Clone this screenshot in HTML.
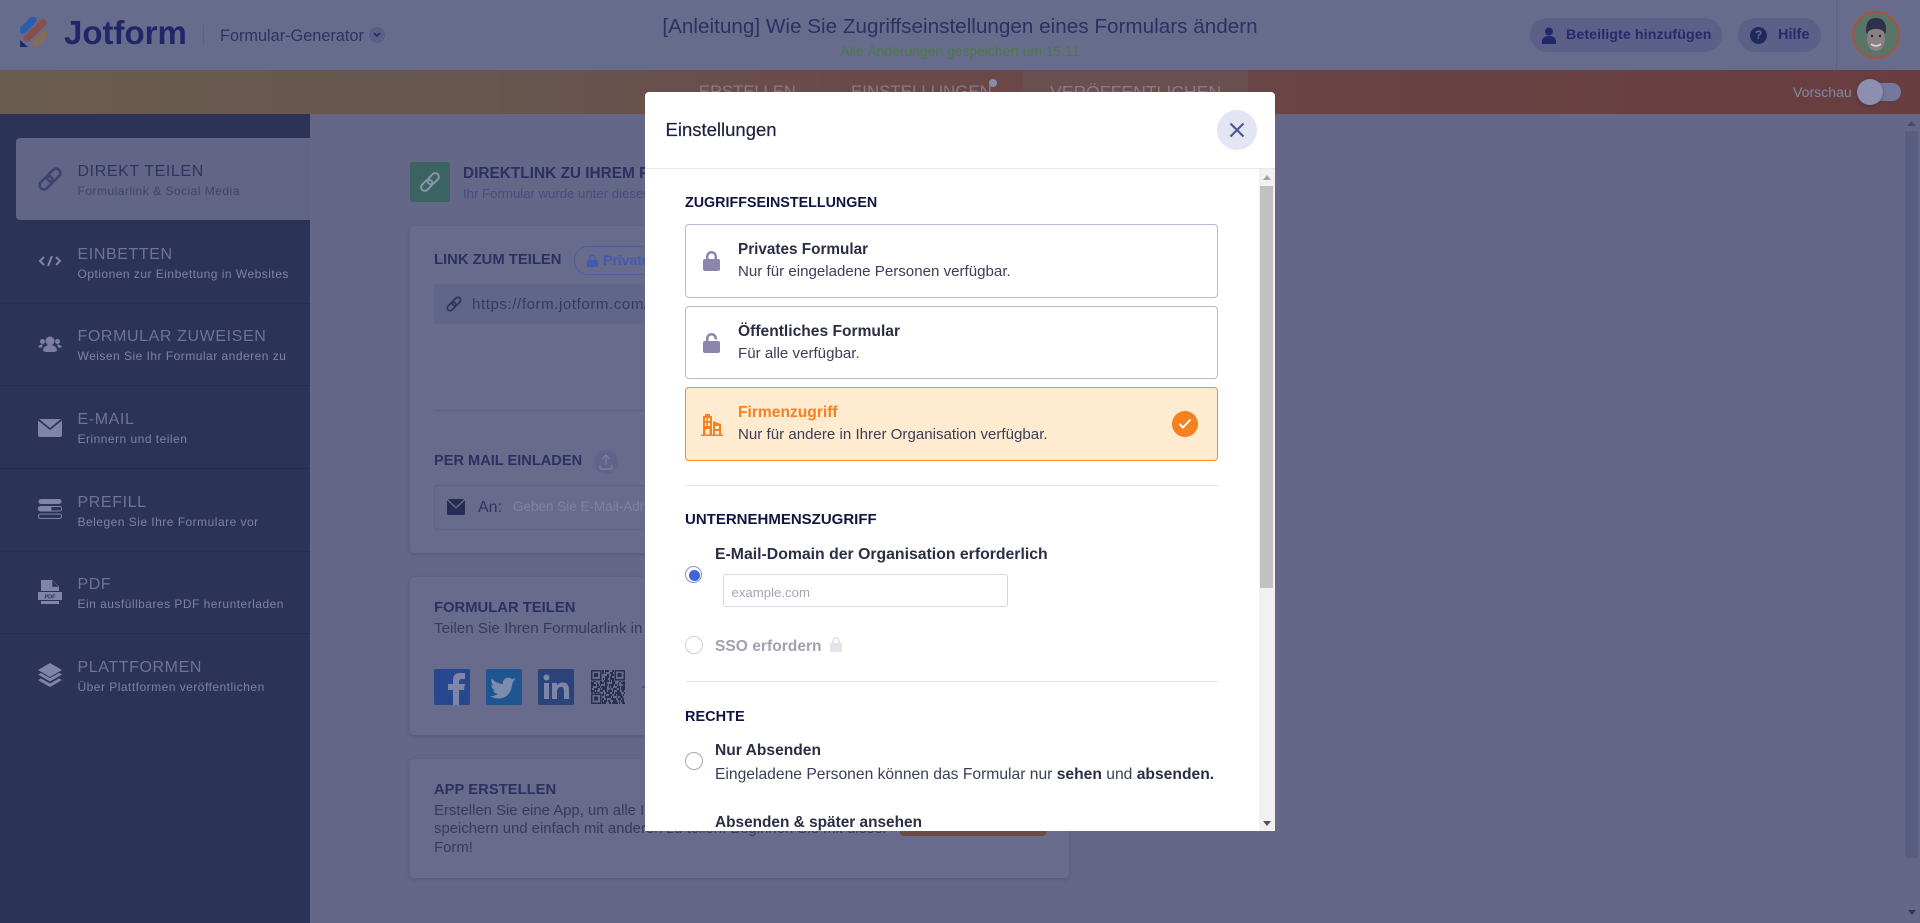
<!DOCTYPE html>
<html lang="de"><head><meta charset="utf-8"><title>Jotform</title>
<style>
html,body{margin:0;padding:0;width:1920px;height:923px;overflow:hidden;background:#646787;font-family:"Liberation Sans",sans-serif}
div,span,svg{position:absolute}
.t{white-space:nowrap;line-height:20px;height:20px}
.st{color:#6e7397;font-size:16px;left:77.5px;letter-spacing:.6px}
.ss{color:#7f83a3;font-size:12px;left:77.5px;letter-spacing:.48px}
.card{left:410px;width:659px;background:#686b8b;border-radius:4px;box-shadow:0 1px 3px rgba(40,44,80,.25)}
.h{font-weight:700;color:#2a3160;font-size:14.8px;left:434px}
.b{left:434px;font-size:14.9px;color:#343a60}
.mh{font-weight:700;color:#0f1540;font-size:14.5px;left:40px}
.opt{left:40px;width:531px;background:#fff;border:1px solid #b9b9d3;border-radius:4px}
.ot{left:93px;font-size:15.6px;font-weight:700;color:#2b2f45}
.os{left:93px;font-size:15.1px;color:#3a3e58}
.rad{width:16px;height:16px;border:1px solid #a8a8b4;border-radius:50%;background:#fff;left:40px}
</style></head><body>

<!-- header -->
<div style="left:0;top:0;width:1920px;height:70px;background:#686c8c"></div>
<svg style="left:20px;top:17px" width="28" height="31" viewBox="0 0 28 31">
<path d="M3 13 L13 3" stroke="#2a5ea8" stroke-width="7.5" stroke-linecap="round"/>
<path d="M7 21 L23 6" stroke="#85504f" stroke-width="7.5" stroke-linecap="round"/>
<path d="M16 26 L24 18" stroke="#866c55" stroke-width="7.5" stroke-linecap="round"/>
<path d="M0 23 L8 30 H0Z" fill="#20296a"/></svg>
<div class="t" style="left:64px;top:23px;font-size:33px;font-weight:700;color:#1f2768">Jotform</div>
<div style="left:203px;top:25px;width:1px;height:20px;background:#5d6185"></div>
<div class="t" style="left:220px;top:26px;font-size:16.3px;color:#2b3362">Formular-Generator</div>
<div style="left:369px;top:27px;width:16px;height:16px;border-radius:50%;background:#5a5f88"></div>
<svg style="left:373px;top:32px" width="8" height="6" viewBox="0 0 8 6"><path d="M1 1l3 3 3-3" fill="none" stroke="#252b63" stroke-width="1.6"/></svg>
<div class="t" style="left:560px;width:800px;text-align:center;top:17px;font-size:20.7px;color:#2a3163">[Anleitung] Wie Sie Zugriffseinstellungen eines Formulars ändern</div>
<div class="t" style="left:760px;width:400px;text-align:center;top:41px;font-size:13.9px;color:#4a7a46">Alle Änderungen gespeichert um 15:11</div>
<div style="left:1530px;top:18px;width:192px;height:34px;border-radius:17px;background:#5c6088"></div>
<svg style="left:1542px;top:27px" width="14" height="17" viewBox="0 0 14 17"><circle cx="7" cy="4.5" r="4" fill="#20276a"/><path d="M0 17v-3c0-3 3-5 7-5s7 2 7 5v3z" fill="#20276a"/></svg>
<div class="t" style="left:1566px;top:25px;font-size:14.2px;font-weight:700;color:#242b6a;letter-spacing:.1px">Beteiligte hinzufügen</div>
<div style="left:1738px;top:18px;width:83px;height:34px;border-radius:17px;background:#5c6088"></div>
<div style="left:1750px;top:27px;width:17px;height:17px;border-radius:50%;background:#20285e;color:#686c8c;font-size:12px;font-weight:700;line-height:17px;text-align:center">?</div>
<div class="t" style="left:1778px;top:25px;font-size:14.5px;font-weight:700;color:#242b6a">Hilfe</div>
<div style="left:1836px;top:0;width:1px;height:70px;background:#5f6383"></div>
<svg style="left:1852px;top:11px" width="48" height="48" viewBox="0 0 48 48">
<circle cx="24" cy="24" r="23" fill="#5a7468" stroke="#a5533f" stroke-width="2"/>
<path d="M14 20c0-10 4-13 10-13s10 3 10 13l-2 6H16z" fill="#2c3049"/>
<ellipse cx="24" cy="27" rx="9" ry="13" fill="#8a8084"/>
<path d="M15 22c3-5 14-6 18 0l1-8-8-5-9 3z" fill="#2c3049"/>
<path d="M19 33q5 4 10 0" stroke="#d8d8e0" stroke-width="1.5" fill="none"/>
<circle cx="20" cy="25" r="1.2" fill="#252838"/><circle cx="28" cy="25" r="1.2" fill="#252838"/>
</svg>

<!-- orange bar -->
<div style="left:0;top:70px;width:1920px;height:44px;background:linear-gradient(90deg,#6a5c4e 0%,#68564f 25%,#6a4a49 45%,#683d3f 100%)"></div>
<div style="left:1023px;top:70px;width:225px;height:44px;background:#6a4f50"></div>
<div class="t" style="left:699px;top:82px;font-size:16.6px;color:#8a7a85">ERSTELLEN</div>
<div class="t" style="left:851px;top:82px;font-size:16.9px;color:#8a7a85">EINSTELLUNGEN</div>
<div style="left:989px;top:79px;width:8px;height:8px;border-radius:50%;background:#8a8ca8"></div>
<div class="t" style="left:1050px;top:82px;font-size:17.6px;color:#8a7a85">VERÖFFENTLICHEN</div>
<div class="t" style="left:1793px;top:82px;font-size:14.1px;color:#8487a6">Vorschau</div>
<div style="left:1858px;top:83px;width:43px;height:18px;border-radius:9px;background:#74789a"></div>
<div style="left:1857px;top:79px;width:26px;height:26px;border-radius:50%;background:#8c8fb0;box-shadow:0 1px 3px rgba(30,30,60,.4)"></div>

<!-- sidebar -->
<div style="left:0;top:114px;width:310px;height:809px;background:#2b3357"></div>
<div style="left:16px;top:138px;width:294px;height:82px;background:#626585;border-radius:4px 0 0 4px"></div>
<div style="left:0;top:303px;width:310px;height:1px;background:#262d4f"></div>
<div style="left:0;top:385px;width:310px;height:1px;background:#262d4f"></div>
<div style="left:0;top:468px;width:310px;height:1px;background:#262d4f"></div>
<div style="left:0;top:551px;width:310px;height:1px;background:#262d4f"></div>
<div style="left:0;top:633px;width:310px;height:1px;background:#262d4f"></div>

<div class="t st" style="top:162px;color:#2d3560">DIREKT TEILEN</div>
<div class="t ss" style="top:181px;color:#3d4570">Formularlink &amp; Social Media</div>
<div class="t st" style="top:245px">EINBETTEN</div>
<div class="t ss" style="top:264px">Optionen zur Einbettung in Websites</div>
<div class="t st" style="top:327px">FORMULAR ZUWEISEN</div>
<div class="t ss" style="top:346px">Weisen Sie Ihr Formular anderen zu</div>
<div class="t st" style="top:410px">E-MAIL</div>
<div class="t ss" style="top:429px">Erinnern und teilen</div>
<div class="t st" style="top:493px">PREFILL</div>
<div class="t ss" style="top:512px">Belegen Sie Ihre Formulare vor</div>
<div class="t st" style="top:575px">PDF</div>
<div class="t ss" style="top:594px">Ein ausfüllbares PDF herunterladen</div>
<div class="t st" style="top:658px">PLATTFORMEN</div>
<div class="t ss" style="top:677px">Über Plattformen veröffentlichen</div>

<svg style="left:36px;top:165px" width="28" height="28" viewBox="0 0 26 26" fill="none" stroke="#3c436d" stroke-width="2.4"><g transform="rotate(-45 13 13)"><rect x="1" y="9" width="14" height="8" rx="4"/><rect x="11" y="9" width="14" height="8" rx="4"/></g></svg>
<svg style="left:38px;top:255px" width="24" height="12" viewBox="0 0 24 12" fill="none" stroke="#8084a6" stroke-width="2"><path d="M6 2L2 6l4 4M18 2l4 4-4 4M14 1l-4 10"/></svg>
<svg style="left:38px;top:336px" width="24" height="16" viewBox="0 0 24 16" fill="#7b7fa2"><circle cx="12" cy="5" r="4.5"/><circle cx="4.5" cy="5.5" r="2.5"/><circle cx="19.5" cy="5.5" r="2.5"/><path d="M5 15c0-4 3-6 7-6s7 2 7 6l-3 1H8zM0 11c1-2 3-2.5 5-2.5l-1.500 3.500zM24 11c-1-2-3-2.500-5-2.500l1.500 3.500z"/></svg>
<svg style="left:38px;top:419px" width="24" height="18" viewBox="0 0 24 18"><path d="M1 0h22l-11 9z" fill="#8084a6"/><path d="M0 1.5l12 9.5 12-9.5V16a2 2 0 0 1-2 2H2a2 2 0 0 1-2-2z" fill="#8084a6"/></svg>
<svg style="left:38px;top:499px" width="24" height="20" viewBox="0 0 24 20"><rect x="0.5" y="0" width="23" height="5" rx="2.5" fill="#8084a6"/><rect x="0.5" y="7.5" width="23" height="4.5" rx="2" fill="#2b3357" stroke="#8084a6"/><rect x="0.5" y="7.5" width="13" height="4.5" rx="2" fill="#8084a6"/><rect x="0.5" y="15" width="23" height="4.5" rx="2" fill="none" stroke="#8084a6"/></svg>
<svg style="left:38px;top:580px" width="24" height="24" viewBox="0 0 24 24" fill="#8084a6"><path d="M3 0h11l7 7v4H3z"/><path d="M14 0v7h7z" fill="#2b3357" stroke="#8084a6" stroke-width=".5"/><rect x="0" y="12" width="24" height="8"/><rect x="3" y="21" width="18" height="3"/><text x="12" y="18.5" font-size="5.5" font-weight="700" text-anchor="middle" fill="#2b3357" font-family="Liberation Sans">PDF</text></svg>
<svg style="left:38px;top:663px" width="24" height="24" viewBox="0 0 24 24" fill="#8084a6"><path d="M12 0l12 7-12 7L0 7z"/><path d="M0 11.5l3-1.5 9 5 9-5 3 1.5-12 7z"/><path d="M0 17l3-1.5 9 5 9-5 3 1.5-12 7z"/></svg>

<!-- main -->
<div style="left:410px;top:162px;width:40px;height:40px;border-radius:3px;background:#3a6362"></div>
<svg style="left:418px;top:170px" width="24" height="24" viewBox="0 0 26 26" fill="none" stroke="#8a93a8" stroke-width="2.2"><g transform="rotate(-45 13 13)"><rect x="1" y="9" width="14" height="8" rx="4"/><rect x="11" y="9" width="14" height="8" rx="4"/></g></svg>
<div class="t h" style="left:463px;top:164px;font-size:15.4px">DIREKTLINK ZU IHREM FORMULAR</div>
<div class="t" style="left:463px;top:184px;font-size:13.2px;color:#474d7c">Ihr Formular wurde unter dieser URL veröffentlicht</div>

<div class="card" style="top:226px;height:327px"></div>
<div class="t h" style="top:250px">LINK ZUM TEILEN</div>
<div style="left:574px;top:246px;width:90px;height:27px;border:1px solid #4a5fa5;border-radius:14px"></div>
<svg style="left:587px;top:254px" width="11" height="13" viewBox="0 0 11 13" fill="#3f59b5"><path d="M2 6V4a3.500 3.500 0 0 1 7 0v2h1a1 1 0 0 1 1 1v5a1 1 0 0 1-1 1H1a1 1 0 0 1-1-1V7a1 1 0 0 1 1-1zM3.500 6h4V4a2 2 0 0 0-4 0z"/></svg>
<div class="t" style="left:603px;top:250px;font-size:14px;font-weight:700;color:#3f59b5">Privates Formular</div>
<div style="left:434px;top:284px;width:620px;height:40px;border-radius:3px;background:#61658a"></div>
<svg style="left:445px;top:295px" width="18" height="18" viewBox="0 0 26 26" fill="none" stroke="#2d3460" stroke-width="2.6"><g transform="rotate(-45 13 13)"><rect x="1" y="9" width="14" height="8" rx="4"/><rect x="11" y="9" width="14" height="8" rx="4"/></g></svg>
<div class="t" style="left:472px;top:295px;font-size:15px;color:#343a5e;letter-spacing:.6px">https://form.jotform.com/220000000000000</div>
<div style="left:434px;top:410px;width:620px;height:1px;background:#5f6383"></div>
<div class="t h" style="top:451px;font-size:14.6px">PER MAIL EINLADEN</div>
<div style="left:594px;top:450px;width:24px;height:24px;border-radius:50%;background:#60648a"></div>
<svg style="left:599px;top:454px" width="14" height="16" viewBox="0 0 14 16" fill="none" stroke="#7c80a0" stroke-width="1.2"><path d="M7 11V1M3 5l4-4 4 4M1 11v3a1 1 0 0 0 1 1h10a1 1 0 0 0 1-1v-3"/></svg>
<div style="left:434px;top:485px;width:620px;height:43px;border:1px solid #5c6388;border-radius:4px"></div>
<svg style="left:447px;top:499px" width="18" height="16" viewBox="0 0 24 18" preserveAspectRatio="none"><path d="M1 0h22l-11 9z" fill="#252c55"/><path d="M0 1.5l12 9.5 12-9.500V16a2 2 0 0 1-2 2H2a2 2 0 0 1-2-2z" fill="#252c55"/></svg>
<div class="t" style="left:478px;top:498px;font-size:16px;color:#2e3560">An:</div>
<div class="t" style="left:513px;top:497px;font-size:13.5px;color:#7f83a3">Geben Sie E-Mail-Adressen ein</div>

<div class="card" style="top:577px;height:158px"></div>
<div class="t h" style="top:598px">FORMULAR TEILEN</div>
<div class="t b" style="top:619px;font-size:15.2px">Teilen Sie Ihren Formularlink in sozialen Medien</div>
<div style="left:434px;top:669px;width:36px;height:36px;border-radius:2px;background:#27488f"></div>
<svg style="left:434px;top:669px" width="36" height="36" viewBox="0 0 36 36"><path d="M19 36V21h-5v-6h5v-4c0-5 3-7 7-7h5v6h-3c-2 0-3 1-3 3v2h6l-1 6h-5v15z" fill="#7d85a8"/></svg>
<div style="left:486px;top:669px;width:36px;height:36px;border-radius:2px;background:#1e5590"></div>
<svg style="left:486px;top:669px" width="36" height="36" viewBox="0 0 36 36"><path d="M30 11c-1 .5-2 .7-3 .9 1-.7 2-1.700 2.300-3-1 .6-2.200 1-3.300 1.300a5.300 5.300 0 0 0-9 4.800C12.500 14.800 8.600 12.700 6 9.500c-1.400 2.400-.7 5.500 1.600 7-.8 0-1.700-.2-2.400-.6 0 2.500 1.800 4.700 4.200 5.200-.8.200-1.600.2-2.400.1.700 2.100 2.600 3.600 4.900 3.700-2.200 1.700-5 2.500-7.900 2.200 8 5 20 2.500 22-10 .5-1.500.5-2.500.5-3.700 1.100-.8 2-1.800 2.700-2.900z" fill="#7b8cad"/></svg>
<div style="left:538px;top:669px;width:36px;height:36px;border-radius:2px;background:#2a4378"></div>
<svg style="left:538px;top:669px" width="36" height="36" viewBox="0 0 36 36" fill="#7d85a8"><rect x="6" y="14" width="5" height="16"/><circle cx="8.5" cy="8.5" r="3"/><path d="M14 14h5v2.500c1-1.800 3-3 5.500-3 5 0 6.500 3 6.500 8V30h-5v-7.500c0-2.500-.5-4.500-3-4.500s-4 2-4 4.500V30h-5z"/></svg>
<svg style="left:591px;top:670px" width="34" height="34" viewBox="0 0 34 34">
<g fill="none" stroke="#2a3050" stroke-width="2">
<path d="M0 1h34" stroke-dasharray="3 1 5 2 2 1 4 3 6 2"/><path d="M0 3h34" stroke-dasharray="1 3 2 1 6 1 1 4 3"/><path d="M0 5h34" stroke-dasharray="4 2 1 1 3 5 2 2"/><path d="M0 7h34" stroke-dasharray="2 2 5 1 1 3 4 1"/><path d="M0 9h34" stroke-dasharray="6 1 2 3 1 1 3 2"/><path d="M0 11h34" stroke-dasharray="1 1 3 4 2 2 5 1"/><path d="M0 13h34" stroke-dasharray="3 3 1 2 4 1 2 5"/><path d="M0 15h34" stroke-dasharray="5 1 2 1 1 4 3 1"/><path d="M0 17h34" stroke-dasharray="2 4 3 1 6 2 1 1"/><path d="M0 19h34" stroke-dasharray="1 2 4 2 1 1 5 3"/><path d="M0 21h34" stroke-dasharray="4 1 1 3 3 2 2 1"/><path d="M0 23h34" stroke-dasharray="2 1 6 3 1 2 4 2"/><path d="M0 25h34" stroke-dasharray="3 2 2 1 5 1 1 3"/><path d="M0 27h34" stroke-dasharray="1 4 1 2 3 3 6 1"/><path d="M0 29h34" stroke-dasharray="5 2 3 1 2 2 1 4"/><path d="M0 31h34" stroke-dasharray="2 3 4 2 1 1 3 1"/><path d="M0 33h34" stroke-dasharray="6 1 1 2 5 3 2 1"/></g>
<g fill="#686b8b"><rect width="11" height="11"/><rect x="23" width="11" height="11"/><rect y="23" width="11" height="11"/></g>
<g fill="none" stroke="#2a3050" stroke-width="1.5"><rect x=".75" y=".75" width="9" height="9"/><rect x="24.25" y=".75" width="9" height="9"/><rect x=".75" y="24.25" width="9" height="9"/></g>
<g fill="#2a3050"><rect x="3" y="3" width="4" height="4"/><rect x="26.5" y="3" width="4" height="4"/><rect x="3" y="26.5" width="4" height="4"/></g></svg>
<div style="left:642px;top:686px;width:3px;height:2px;background:#2b5aa0"></div>

<div class="card" style="top:759px;height:119px"></div>
<div class="t h" style="top:780px">APP ERSTELLEN</div>
<div class="t b" style="top:801px">Erstellen Sie eine App, um alle Ihre Formulare an einem Ort zu</div>
<div class="t b" style="top:819px">speichern und einfach mit anderen zu teilen. Beginnen Sie mit dieser</div>
<div class="t b" style="top:838px">Form!</div>
<div style="left:900px;top:800px;width:146px;height:36px;border-radius:3px;background:#6e4a45"></div>

<!-- page scrollbar -->
<svg style="left:1905px;top:119px" width="13" height="8"><path d="M2 7h9L6.500 2z" fill="#474b6b"/></svg>
<div style="left:1905px;top:131px;width:13px;height:727px;background:#595d7f"></div>
<svg style="left:1908px;top:910px" width="8" height="6"><path d="M0 0h8L4 5z" fill="#2e3358"/></svg>

<!-- modal -->
<div style="left:645px;top:92px;width:630px;height:739px;background:#fff;border-radius:4px 4px 0 0;overflow:hidden">
  <div class="t" style="left:20.5px;top:28px;font-size:18.5px;color:#1d2140;-webkit-text-stroke:.2px #1d2140">Einstellungen</div>
  <div style="left:572px;top:18px;width:40px;height:40px;border-radius:50%;background:#e3e5f5"></div>
  <svg style="left:584px;top:30px" width="16" height="16" viewBox="0 0 16 16"><path d="M1.5 1.5l13 13M14.5 1.5l-13 13" stroke="#4c5a94" stroke-width="2.2"/></svg>
  <div style="left:0;top:76px;width:630px;height:1px;background:#e6e7f0"></div>

  <div class="t mh" style="top:101px;font-size:14.3px">ZUGRIFFSEINSTELLUNGEN</div>
  <div class="opt" style="top:132px;height:72px"></div>
  <svg style="left:58px;top:159px" width="17" height="20" viewBox="0 0 17 20" fill="#8a86ae"><path d="M3 8V5.500a5.500 5.500 0 0 1 11 0V8h1a2 2 0 0 1 2 2v8a2 2 0 0 1-2 2H2a2 2 0 0 1-2-2v-8a2 2 0 0 1 2-2zM5.500 8h6V5.500a3 3 0 0 0-6 0z"/></svg>
  <div class="t ot" style="top:148px;font-size:15.3px">Privates Formular</div>
  <div class="t os" style="top:170px">Nur für eingeladene Personen verfügbar.</div>

  <div class="opt" style="top:214px;height:71px"></div>
  <svg style="left:58px;top:241px" width="17" height="20" viewBox="0 0 17 20" fill="#8a86ae"><path d="M3 8V5.500a5.500 5.500 0 0 1 11 0v1h-2.500v-1a3 3 0 0 0-6 0V8H15a2 2 0 0 1 2 2v8a2 2 0 0 1-2 2H2a2 2 0 0 1-2-2v-8a2 2 0 0 1 2-2z"/></svg>
  <div class="t ot" style="top:230px">Öffentliches Formular</div>
  <div class="t os" style="top:252px">Für alle verfügbar.</div>

  <div class="opt" style="top:295px;height:72px;background:#feebd0;border-color:#f58d2c"></div>
  <svg style="left:56px;top:322px" width="22" height="22" viewBox="0 0 22 22" fill="#f5811f"><path fill-rule="evenodd" d="M2 2h2V0h5v2h2v19H2zM4 4v3h1.500V4zM7 4v3h2V4zM4 9v3h1.500V9zM7 9v3h2V9zM4.500 15v6h4v-6z"/><path fill-rule="evenodd" d="M12 7l8 3v11h-8zM14 12v3h4v-3zM14 17v4h4v-4z"/><rect x="0" y="20.500" width="22" height="1.500"/></svg>
  <div class="t ot" style="top:311px;color:#f5811f">Firmenzugriff</div>
  <div class="t os" style="top:333px">Nur für andere in Ihrer Organisation verfügbar.</div>
  <div style="left:527px;top:319px;width:26px;height:26px;border-radius:50%;background:#f5811f"></div>
  <svg style="left:533px;top:326px" width="14" height="12" viewBox="0 0 14 12"><path d="M1.5 6l3.500 3.500 7.500-8" fill="none" stroke="#fff" stroke-width="2"/></svg>
  <div style="left:40px;top:393px;width:533px;height:1px;background:#e6e7ee"></div>

  <div class="t mh" style="top:418px;font-size:15px">UNTERNEHMENSZUGRIFF</div>
  <div class="t ot" style="left:70px;top:453px;font-size:15.8px">E-Mail-Domain der Organisation erforderlich</div>
  <div class="rad" style="top:474px;border:1.5px solid #7d93dc;width:15px;height:15px"></div>
  <div style="left:43.500px;top:477.500px;width:11px;height:11px;border-radius:50%;background:#3e66da"></div>
  <div style="left:78px;top:482px;border:1px solid #d5d7ea;border-radius:3px;box-sizing:border-box;width:285px;height:33px"></div>
  <div class="t" style="left:86.500px;top:491px;font-size:13.2px;color:#a4a6b6">example.com</div>
  <div class="rad" style="top:544px;border-color:#d0d0d8"></div>
  <div class="t ot" style="left:70px;top:545px;color:#a0a2ac">SSO erfordern</div>
  <svg style="left:185px;top:545px" width="12" height="15" viewBox="0 0 17 20" preserveAspectRatio="none" fill="#e3e4ea"><path d="M3 8V5.500a5.500 5.500 0 0 1 11 0V8h1a2 2 0 0 1 2 2v8a2 2 0 0 1-2 2H2a2 2 0 0 1-2-2v-8a2 2 0 0 1 2-2zM5.500 8h6V5.500a3 3 0 0 0-6 0z"/></svg>
  <div style="left:40px;top:589px;width:533px;height:1px;background:#e6e7ee"></div>

  <div class="t mh" style="top:615px">RECHTE</div>
  <div class="t ot" style="left:70px;top:649px">Nur Absenden</div>
  <div class="t os" style="left:70px;top:673px;font-size:15.65px">Eingeladene Personen können das Formular nur <b style="color:#2b2f45">sehen</b> und <b style="color:#2b2f45">absenden.</b></div>
  <div class="rad" style="top:660px;border-color:#a8a8b4"></div>
  <div class="t ot" style="left:70px;top:721px;font-size:15.4px">Absenden &amp; später ansehen</div>

  <!-- modal scrollbar -->
  <div style="left:614px;top:77px;width:16px;height:662px;background:#f1f1f1"></div>
  <svg style="left:618px;top:83px" width="8" height="6"><path d="M0 5h8L4 0z" fill="#a3a3a3"/></svg>
  <div style="left:615px;top:94px;width:13px;height:402px;background:#c1c1c1"></div>
  <svg style="left:618px;top:729px" width="8" height="6"><path d="M0 0h8L4 5z" fill="#505050"/></svg>
</div>
</body></html>
